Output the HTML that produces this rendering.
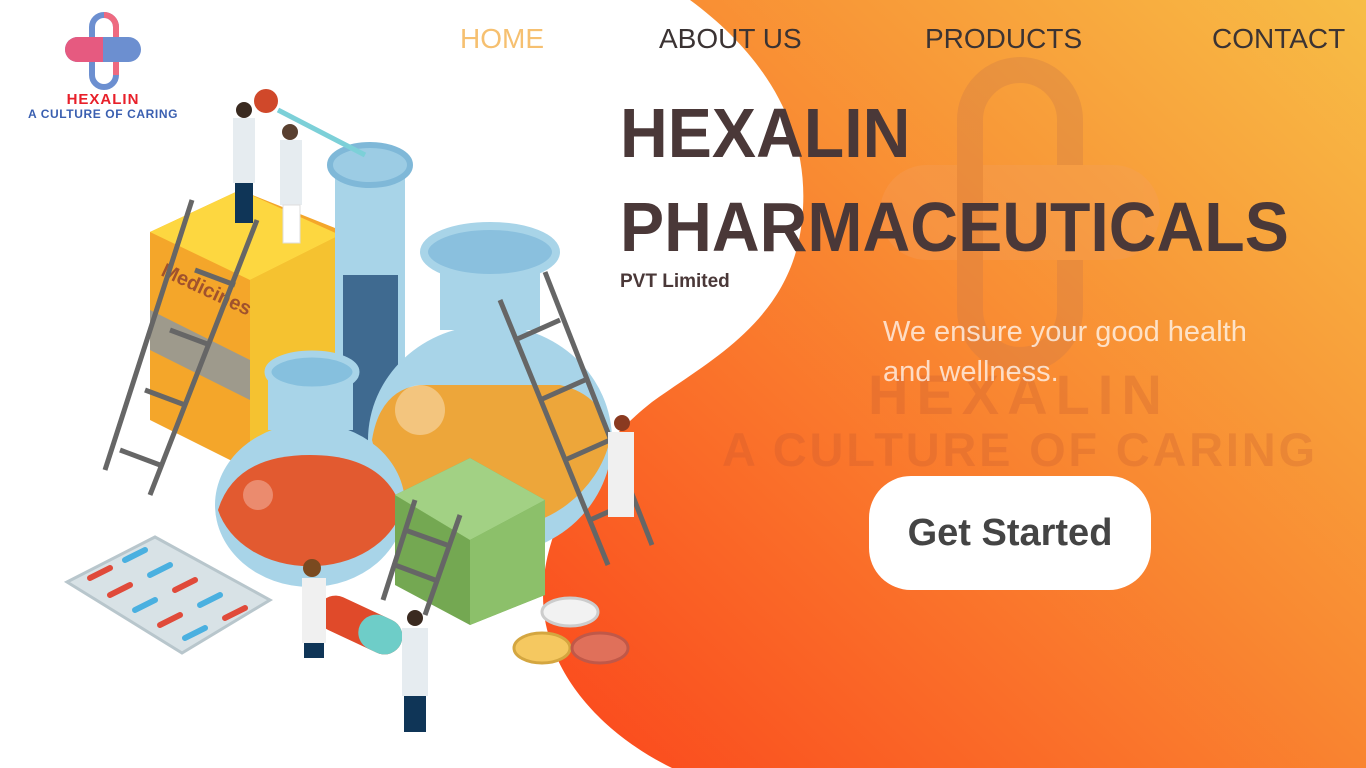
<!DOCTYPE html>
<html><head><meta charset="utf-8"><style>
html,body{margin:0;padding:0;width:1366px;height:768px;overflow:hidden;background:#fff;font-family:"Liberation Sans",sans-serif}
.abs{position:absolute}
.nav{position:absolute;top:23px;font-size:28px;color:#3b3333;white-space:nowrap}
</style></head><body>
<svg class="abs" style="left:0;top:0" width="1366" height="768" viewBox="0 0 1366 768">
<defs>
<linearGradient id="g" x1="0" y1="1" x2="1" y2="0">
<stop offset="0" stop-color="#fb461c"/><stop offset="0.55" stop-color="#f98a32"/><stop offset="1" stop-color="#f7bd46"/>
</linearGradient>
</defs>
<path d="M690,0 C765,55 812,130 802,220 C792,320 710,360 652,402 C585,455 532,540 545,620 C558,690 615,740 672,768 L1366,768 L1366,0 Z" fill="url(#g)"/>
<!-- watermark logo -->
<g opacity="0.3">
<rect x="970" y="70" width="100" height="290" rx="50" fill="none" stroke="#c8784a" stroke-width="26"/>
<rect x="880" y="165" width="280" height="95" rx="47" fill="#f4a060"/>
<rect x="957" y="165" width="26" height="95" fill="#c8784a"/>
</g>
<g opacity="0.22" font-family="Liberation Sans" font-weight="bold" fill="#b85030">
<text x="868" y="414" font-size="56" letter-spacing="8">HEXALIN</text>
<text x="722" y="466" font-size="47" letter-spacing="5" textLength="598">A CULTURE OF CARING</text>
</g>
<!-- yellow box -->
<polygon points="150,232 240,190 340,230 340,420 250,470 150,420" fill="#f4a62a"/>
<polygon points="150,232 240,190 340,235 250,280" fill="#fdd740"/>
<polygon points="250,280 340,235 340,420 250,470" fill="#f5c230"/>
<polygon points="150,310 250,360 250,400 150,350" fill="#9e9a8c"/>
<text x="160" y="275" font-size="20" fill="#a0522d" font-weight="bold" transform="rotate(25 160 275)">Medicines</text>
<!-- tall tube -->
<rect x="335" y="160" width="70" height="290" rx="10" fill="#a8d4e8"/>
<rect x="343" y="275" width="55" height="170" fill="#3f6a90"/>
<ellipse cx="370" cy="165" rx="40" ry="20" fill="#9ccce4" stroke="#7fb8d8" stroke-width="6"/>
<!-- big flask -->
<rect x="440" y="250" width="100" height="80" fill="#a8d4e8"/>
<ellipse cx="490" cy="440" rx="122" ry="115" fill="#a8d4e8"/>
<path d="M372,440 Q380,390 420,385 L560,385 Q605,395 610,440 A122,115 0 0 1 372,440 Z" fill="#eda63a"/>
<ellipse cx="490" cy="252" rx="66" ry="26" fill="#8ac0de" stroke="#a8d4e8" stroke-width="8"/>
<circle cx="420" cy="410" r="25" fill="#fff" opacity="0.35"/>
<!-- small flask -->
<rect x="268" y="370" width="85" height="60" fill="#a8d4e8"/>
<ellipse cx="310" cy="505" rx="95" ry="82" fill="#a8d4e8"/>
<path d="M218,510 Q235,455 310,455 Q385,455 402,510 A95,75 0 0 1 218,510 Z" fill="#e25a30"/>
<ellipse cx="312" cy="372" rx="44" ry="18" fill="#86c0de" stroke="#a8d4e8" stroke-width="7"/>
<circle cx="258" cy="495" r="15" fill="#fff" opacity="0.3"/>
<!-- green box -->
<polygon points="395,495 470,458 545,500 545,595 470,625 395,585" fill="#74a852"/>
<polygon points="395,495 470,458 545,500 470,540" fill="#a2d184"/>
<polygon points="470,540 545,500 545,595 470,625" fill="#8cc06a"/>
<!-- ladders -->
<g stroke="#666" stroke-width="5" fill="none">
<line x1="105" y1="470" x2="192" y2="200"/><line x1="150" y1="495" x2="257" y2="220"/>
<line x1="120" y1="450" x2="160" y2="465"/><line x1="145" y1="390" x2="185" y2="405"/><line x1="170" y1="330" x2="210" y2="345"/><line x1="195" y1="270" x2="235" y2="285"/>
<line x1="500" y1="300" x2="608" y2="565"/><line x1="545" y1="272" x2="652" y2="545"/>
<line x1="515" y1="340" x2="560" y2="320"/><line x1="540" y1="400" x2="585" y2="380"/><line x1="565" y1="460" x2="610" y2="440"/><line x1="590" y1="520" x2="635" y2="500"/>
<line x1="383" y1="600" x2="415" y2="500"/><line x1="425" y1="615" x2="460" y2="515"/>
<line x1="395" y1="565" x2="435" y2="580"/><line x1="405" y1="530" x2="447" y2="545"/>
</g>
<!-- blister -->
<polygon points="67,582 155,537 270,600 182,653" fill="#d8e2e6" stroke="#b8c6cc" stroke-width="3"/>
<g stroke-width="6" stroke-linecap="round">
<line x1="90" y1="578" x2="110" y2="568" stroke="#e04a3a"/><line x1="125" y1="560" x2="145" y2="550" stroke="#4ab0e0"/>
<line x1="110" y1="595" x2="130" y2="585" stroke="#e04a3a"/><line x1="150" y1="575" x2="170" y2="565" stroke="#4ab0e0"/>
<line x1="135" y1="610" x2="155" y2="600" stroke="#4ab0e0"/><line x1="175" y1="590" x2="195" y2="580" stroke="#e04a3a"/>
<line x1="160" y1="625" x2="180" y2="615" stroke="#e04a3a"/><line x1="200" y1="605" x2="220" y2="595" stroke="#4ab0e0"/>
<line x1="185" y1="638" x2="205" y2="628" stroke="#4ab0e0"/><line x1="225" y1="618" x2="245" y2="608" stroke="#e04a3a"/>
</g>
<g transform="rotate(25 360 625)"><rect x="315" y="607" width="90" height="36" rx="18" fill="#e04a2a"/><rect x="360" y="607" width="45" height="36" rx="18" fill="#6ecdc8"/></g>
<ellipse cx="570" cy="612" rx="28" ry="14" fill="#f2f2f2" stroke="#ccc" stroke-width="3"/>
<ellipse cx="542" cy="648" rx="28" ry="15" fill="#f5c860" stroke="#d4a640" stroke-width="3"/>
<ellipse cx="600" cy="648" rx="28" ry="15" fill="#e0705a" stroke="#c05848" stroke-width="3"/>
<!-- people -->
<g>
<circle cx="244" cy="110" r="8" fill="#3a2a20"/><rect x="233" y="118" width="22" height="65" fill="#e6ecf0"/><rect x="235" y="183" width="18" height="40" fill="#0f3557"/>
<circle cx="266" cy="101" r="12" fill="#d0482a"/>
<line x1="278" y1="110" x2="365" y2="155" stroke="#7cd0d8" stroke-width="5"/>
<circle cx="290" cy="132" r="8" fill="#5a4030"/><rect x="280" y="140" width="22" height="65" fill="#e6ecf0"/><rect x="283" y="205" width="17" height="38" fill="#fff" stroke="#ddd"/>
<circle cx="622" cy="423" r="8" fill="#8a3a20"/><rect x="608" y="432" width="26" height="85" fill="#f0f0f0"/>
<circle cx="312" cy="568" r="9" fill="#7a4a20"/><rect x="302" y="578" width="24" height="65" fill="#f0f0f0"/><rect x="304" y="643" width="20" height="15" fill="#0f3557"/>
<circle cx="415" cy="618" r="8" fill="#3a2a20"/><rect x="402" y="628" width="26" height="68" fill="#e6ecf0"/><rect x="404" y="696" width="22" height="36" fill="#0f3557"/>
</g>
<!-- logo -->
<rect x="92" y="15" width="24" height="72" rx="12" fill="none" stroke="#6c8fd0" stroke-width="6"/>
<path d="M104,15 a12,12 0 0 1 12,12 v48" fill="none" stroke="#ee6a80" stroke-width="6"/>
<rect x="65" y="37" width="76" height="25" rx="12.5" fill="#6c8fd0"/>
<path d="M103,37 H77.5 a12.5,12.5 0 0 0 0,25 H103 Z" fill="#e65a80"/>
<text x="103" y="104" font-size="15" font-weight="bold" fill="#e8202a" text-anchor="middle" letter-spacing="1">HEXALIN</text>
<text x="103" y="118" font-size="12" font-weight="bold" fill="#3a5fb0" text-anchor="middle" letter-spacing="0.6">A CULTURE OF CARING</text>
</svg>
<div class="nav" style="left:460px;color:#f6c070">HOME</div>
<div class="nav" style="left:659px">ABOUT US</div>
<div class="nav" style="left:925px">PRODUCTS</div>
<div class="nav" style="left:1212px">CONTACT</div>
<div class="abs" style="left:620px;top:86px;font-size:70px;font-weight:bold;color:#4a3838;line-height:94px;white-space:nowrap;transform:scaleX(0.945);transform-origin:left">HEXALIN<br>PHARMACEUTICALS</div>
<div class="abs" style="left:620px;top:271px;font-size:19px;font-weight:bold;color:#4a3838">PVT Limited</div>
<div class="abs" style="left:883px;top:312px;font-size:29px;line-height:40px;color:rgba(255,255,255,0.72);white-space:nowrap">We ensure your good health<br>and wellness.</div>
<div class="abs" style="left:869px;top:476px;width:282px;height:114px;border-radius:42px;background:#fff;color:#444;font-size:38px;font-weight:bold;line-height:114px;text-align:center">Get Started</div>
</body></html>
